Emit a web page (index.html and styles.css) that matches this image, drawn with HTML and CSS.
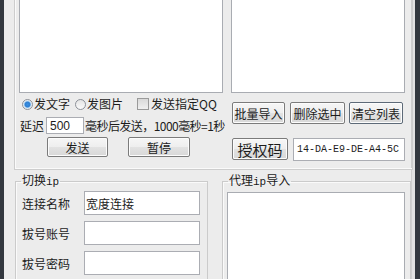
FILE: index.html
```html
<!DOCTYPE html>
<html lang="zh">
<head>
<meta charset="utf-8">
<link rel="stylesheet" href="styles.css">
</head>
<body>
<div class="window">
  <div class="client">
    <div class="panel">
      <div class="lists">
        <div class="listbox lb-left"></div>
        <div class="listbox lb-right"></div>
      </div>
      <div class="controls">
        <div class="ctl-left">
          <div class="radios">
            <span class="radio checked"></span><span class="opt">发文字</span>
            <span class="radio r2"></span><span class="opt">发图片</span>
            <span class="check"></span><span class="opt">发送指定QQ</span>
          </div>
          <div class="delay">
            <span class="lbl">延迟</span>
            <span class="input small">500</span>
            <span class="lbl hint">毫秒后发送，1000毫秒=1秒</span>
          </div>
          <div class="send-row">
            <span class="btn b-send">发送</span>
            <span class="btn b-pause">暂停</span>
          </div>
        </div>
        <div class="ctl-right">
          <div class="tool-row">
            <span class="btn b-imp">批量导入</span>
            <span class="btn b-del">删除选中</span>
            <span class="btn b-clr">清空列表</span>
          </div>
          <div class="auth-row">
            <span class="btn b-auth">授权码</span>
            <span class="input code">14-DA-E9-DE-A4-5C</span>
          </div>
        </div>
      </div>
    </div>
    <div class="groups">
      <fieldset class="group g-left">
        <legend>切换<span class="mono">ip</span></legend>
        <div class="field"><span class="flabel">连接名称</span><span class="input wide">宽度连接</span></div>
        <div class="field"><span class="flabel">拔号账号</span><span class="input wide"></span></div>
        <div class="field"><span class="flabel">拔号密码</span><span class="input wide"></span></div>
      </fieldset>
      <fieldset class="group g-right">
        <legend>代理<span class="mono">ip</span>导入</legend>
        <div class="listbox lb-proxy"></div>
      </fieldset>
    </div>
  </div>
</div>
</body>
</html>
```
FILE: styles.css
```css
html, body {
  margin: 0;
  padding: 0;
}
body {
  width: 420px;
  height: 279px;
  overflow: hidden;
  background: #ececec;
  font-family: "Noto Sans CJK SC", "Liberation Sans", sans-serif;
  font-size: 12px;
  color: #1c1c1c;
}
.window {
  height: 279px;
  border-left: 4px solid #33383f;
  border-right: 5px solid #33383f;
  background: #ececec;
  box-sizing: border-box;
  overflow: hidden;
}
.client {
  display: flex;
  flex-direction: column;
  height: 100%;
  box-shadow: inset -3px 0 0 #e2e2e2, inset -4px 0 0 #cfcfcf;
}
.panel {
  margin-left: 10px;
  width: 399px;
  height: 170px;
  box-sizing: border-box;
  border: 1px solid #cdcdcd;
  border-top: none;
  box-shadow: inset 1px 0 0 #fafafa, inset 0 -1px 0 #fafafa;
  flex: none;
}
.lists {
  display: flex;
  gap: 8px;
  padding-left: 4px;
}
.listbox {
  background: #fff;
  border: 1px solid #a9acb2;
  box-sizing: border-box;
}
.lists .listbox {
  border-top: none;
  height: 93px;
}
.lb-left { width: 204px; }
.lb-right { width: 174px; }

.controls {
  display: flex;
}
.ctl-left {
  width: 217px;
  padding-left: 5px;
  box-sizing: border-box;
}
.radios {
  display: flex;
  align-items: center;
  height: 14px;
  margin-top: 4px;
  line-height: 14px;
}
.radio {
  width: 11px;
  height: 11px;
  border-radius: 50%;
  border: 1px solid #8d9199;
  box-sizing: border-box;
  background: linear-gradient(#e4e4e4, #fbfbfb);
  margin-left: 2px;
  margin-right: 1px;
  flex: none;
}
.radio.checked {
  background: radial-gradient(circle at 50% 50%, #3a8fe0 0, #2e7fd3 2.5px, #bcdcf6 3.5px, #f4f4f4 4.5px);
}
.radio.r2 { margin-left: 5px; }
.check {
  width: 12px;
  height: 12px;
  border: 1px solid #9a9a9a;
  box-sizing: border-box;
  background: linear-gradient(#d9d9d9, #f0f0f0);
  margin-left: 14px;
  margin-right: 2px;
  flex: none;
}
.opt { white-space: nowrap; }

.delay {
  display: flex;
  align-items: center;
  margin-top: 6px;
  height: 17px;
}
.lbl { white-space: nowrap; }
.input {
  display: inline-flex;
  align-items: center;
  background: #fff;
  border: 1px solid #abadb3;
  box-sizing: border-box;
  padding-left: 3px;
  white-space: nowrap;
}
.input.small {
  width: 38px;
  height: 17px;
  margin-left: 2px;
  margin-right: 1px;
  font-family: "Liberation Sans", sans-serif;
  font-size: 12px;
}
.hint { letter-spacing: -0.55px; }

.send-row {
  display: flex;
  margin-top: 3px;
}
.btn {
  display: inline-flex;
  align-items: center;
  justify-content: center;
  box-sizing: border-box;
  border: 1px solid #7b7b7b;
  border-radius: 2px;
  background: linear-gradient(#f6f6f6 0%, #eeeeee 50%, #e2e2e2 51%, #d8d8d8 100%);
  box-shadow: inset 0 0 0 1px #fcfcfc;
  white-space: nowrap;
  flex: none;
}
.b-send { width: 61px; height: 20px; margin-left: 27px; }
.b-pause { width: 62px; height: 20px; margin-left: 20px; }

.ctl-right {
  padding-top: 9px;
}
.tool-row {
  display: flex;
}
.b-imp { width: 53px; height: 22px; }
.b-del { width: 55px; height: 22px; margin-left: 5px; }
.b-clr { width: 54px; height: 22px; margin-left: 4px; border-color: #5d6a78; }
.auth-row {
  display: flex;
  margin-top: 14px;
}
.b-auth { width: 56px; height: 22px; font-size: 15px; }
.input.code {
  width: 112px;
  height: 23px;
  margin-left: 5px;
  padding-left: 3px;
  font-family: "Liberation Mono", monospace;
  font-size: 10px;
}

.groups {
  display: flex;
  margin-top: 3px;
  flex: 1;
}
.group {
  margin: 0;
  padding: 0;
  border: 1px solid #cbcbcb;
  box-shadow: inset 1px 1px 0 #fafafa;
  height: 130px;
  box-sizing: border-box;
  min-width: 0;
}
.group legend {
  padding: 0 1px;
  margin-left: 5px;
  line-height: 14px;
  font-size: 12px;
}
.mono {
  font-family: "Liberation Mono", monospace;
  font-size: 11px;
}
.g-left {
  margin-left: 11px;
  width: 193px;
}
.g-right {
  margin-left: 14px;
  width: 189px;
}
.field {
  display: flex;
  align-items: center;
  height: 24px;
  margin-bottom: 6px;
  padding-left: 6px;
}
.field:first-of-type { margin-top: 2px; }
.flabel {
  width: 62px;
  flex: none;
  white-space: nowrap;
}
.input.wide {
  width: 116px;
  height: 24px;
  padding-left: 1px;
}
.lb-proxy {
  margin-left: 4px;
  margin-top: 3px;
  width: 178px;
  height: 100px;
}
```
